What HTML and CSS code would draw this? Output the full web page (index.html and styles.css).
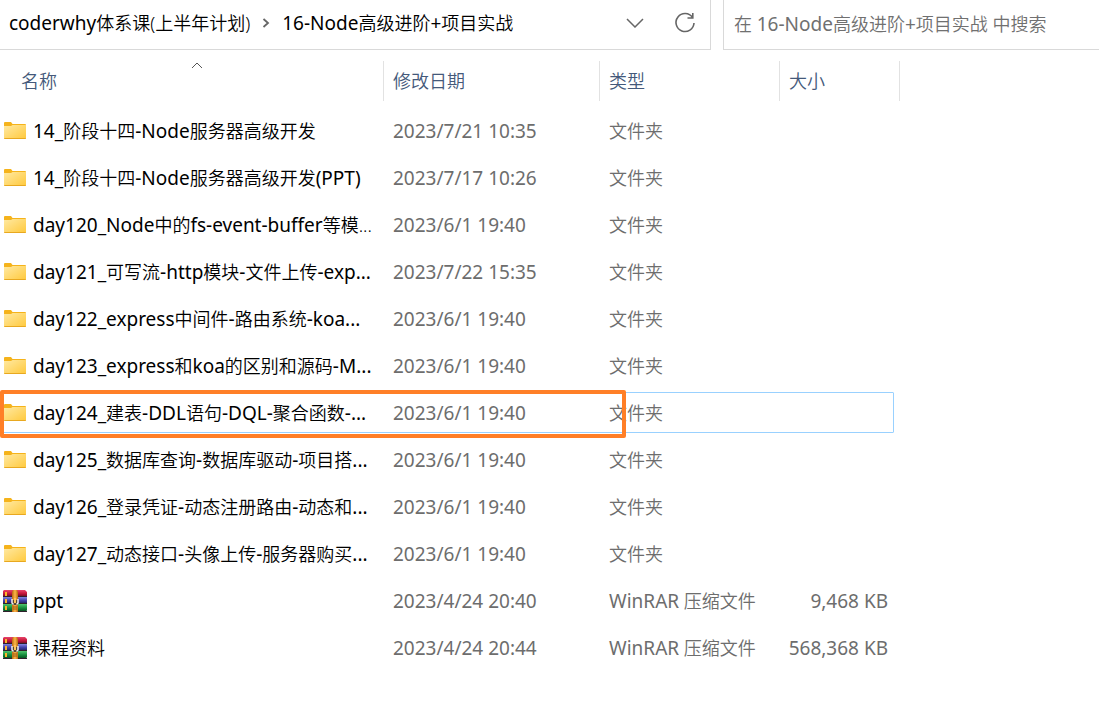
FILE: index.html
```html
<!DOCTYPE html>
<html lang="zh-CN">
<head>
<meta charset="utf-8">
<title>16-Node高级进阶+项目实战</title>
<link rel="stylesheet" href="styles.css">
</head>
<body>
<svg width="0" height="0" class="defs" aria-hidden="true">
  <defs>
    <linearGradient id="gf" x1="0" y1="0" x2="1" y2="1"><stop offset="0" stop-color="#ffe9a2"/><stop offset="1" stop-color="#ffc93c"/></linearGradient>
    <linearGradient id="gr" x1="0" y1="0" x2="0" y2="1"><stop offset="0" stop-color="#e8456a"/><stop offset=".5" stop-color="#c4173c"/><stop offset="1" stop-color="#5e0b20"/></linearGradient>
    <linearGradient id="gb" x1="0" y1="0" x2="0" y2="1"><stop offset="0" stop-color="#8585e0"/><stop offset=".5" stop-color="#4040a8"/><stop offset="1" stop-color="#1c1c55"/></linearGradient>
    <linearGradient id="gg" x1="0" y1="0" x2="0" y2="1"><stop offset="0" stop-color="#4fc56c"/><stop offset=".5" stop-color="#158a3c"/><stop offset="1" stop-color="#06401a"/></linearGradient>
    <linearGradient id="gs" x1="0" y1="0" x2="1" y2="0"><stop offset="0" stop-color="#b86a10"/><stop offset=".5" stop-color="#ffb84a"/><stop offset="1" stop-color="#b86a10"/></linearGradient>
    <symbol id="folder" viewBox="0 0 22 17">
      <path d="M0 1Q0 0 1 0H7L8.500 2H21Q22 2 22 3V8H0Z" fill="#f5b31b"/>
      <path d="M0 4H7L8.500 3H22V16Q22 17 21 17H1Q0 17 0 16Z" fill="url(#gf)"/>
      <path d="M0 16H22Q22 17 21 17H1Q0 17 0 16Z" fill="#e8a820"/>
    </symbol>
    <symbol id="rar" viewBox="0 0 24 22">
      <path d="M1 0H22L24 2V7H0V1Z" fill="url(#gr)"/>
      <path d="M0 7H24V14H0Z" fill="url(#gb)"/>
      <path d="M0 14H24V20L23 22H1L0 20Z" fill="url(#gg)"/>
      <path d="M0 6.500H24M0 13.500H24M0 21.500H24" stroke="#30202c"/>
      <path d="M2 2H4V6H2ZM2 9H4V13H2ZM2 16H4V20H2Z" fill="#ffb52a"/>
      <path d="M10 0H14L15 2V22H9V2Z" fill="url(#gs)"/>
      <path d="M9 10H15V15H9Z" fill="#59452e"/>
      <path d="M9 9V13L10.500 14.500M15 9V13L13.500 14.500" fill="none" stroke="#f0f0f0" stroke-width="1.500"/>
      <path d="M11 8H13V13H11Z" fill="#ffc45a"/>
      <path d="M10 17H14M10 19H14" stroke="#9a5a12"/>
    </symbol>
  </defs>
</svg>
<header class="topbar">
  <div class="address">
    <nav class="crumbs" aria-label="路径">
      <a href="#parent"><span class="en">coderwhy</span>体系课(上半年计划)</a>
      <svg class="sep" width="8" height="10" viewBox="0 0 8 10"><path d="M1.500 1L6 5L1.500 9" fill="none" stroke="#666" stroke-width="1.800"/></svg>
      <a href="#current"><span class="en">16-Node</span>高级进阶<span class="en">+</span>项目实战</a>
    </nav>
    <button class="tool" aria-label="以前的位置"><svg width="18" height="10" viewBox="0 0 18 10"><path d="M1 1L9 9L17 1" fill="none" stroke="#666" stroke-width="1.500"/></svg></button>
    <button class="tool" aria-label="刷新"><svg width="22" height="22" viewBox="0 0 22 22"><path d="M18.500 5.500A9 9 0 1 0 20 11M18.800 1V6H13.500" fill="none" stroke="#666" stroke-width="1.600"/></svg></button>
  </div>
  <div class="search">
    <input id="q" type="search" placeholder=" ">
    <label for="q">在 <span class="en">16-Node</span>高级进阶<span class="en">+</span>项目实战 中搜索</label>
  </div>
</header>
<main class="files">
  <table>
    <colgroup><col class="c-name"><col class="c-date"><col class="c-type"><col class="c-size"></colgroup>
    <thead>
      <tr>
        <th><span class="head first">名称<svg class="sort" width="12" height="7" viewBox="0 0 12 7"><path d="M1 6L6 1L11 6" fill="none" stroke="#555"/></svg></span></th>
        <th><span class="head">修改日期</span></th>
        <th><span class="head">类型</span></th>
        <th><span class="head">大小</span></th>
      </tr>
    </thead>
    <tbody>
      <tr><td class="name"><svg class="folder"><use href="#folder"/></svg><span class="en">14_</span>阶段十四<span class="en">-Node</span>服务器高级开发</td><td class="en">2023/7/21 10:35</td><td>文件夹</td><td></td></tr>
      <tr><td class="name"><svg class="folder"><use href="#folder"/></svg><span class="en">14_</span>阶段十四<span class="en">-Node</span>服务器高级开发<span class="en">(PPT)</span></td><td class="en">2023/7/17 10:26</td><td>文件夹</td><td></td></tr>
      <tr><td class="name"><svg class="folder"><use href="#folder"/></svg><span class="en">day120_Node</span>中的<span class="en">fs-event-buffer</span>等模...</td><td class="en">2023/6/1 19:40</td><td>文件夹</td><td></td></tr>
      <tr><td class="name"><svg class="folder"><use href="#folder"/></svg><span class="en">day121_</span>可写流<span class="en">-http</span>模块<span class="en">-</span>文件上传<span class="en">-exp...</span></td><td class="en">2023/7/22 15:35</td><td>文件夹</td><td></td></tr>
      <tr><td class="name"><svg class="folder"><use href="#folder"/></svg><span class="en">day122_express</span>中间件<span class="en">-</span>路由系统<span class="en">-koa...</span></td><td class="en">2023/6/1 19:40</td><td>文件夹</td><td></td></tr>
      <tr><td class="name"><svg class="folder"><use href="#folder"/></svg><span class="en">day123_express</span>和<span class="en">koa</span>的区别和源码<span class="en">-M...</span></td><td class="en">2023/6/1 19:40</td><td>文件夹</td><td></td></tr>
      <tr class="focused"><td class="name"><svg class="folder"><use href="#folder"/></svg><span class="en">day124_</span>建表<span class="en">-DDL</span>语句<span class="en">-DQL-</span>聚合函数<span class="en">-...</span></td><td class="en">2023/6/1 19:40</td><td>文件夹</td><td></td></tr>
      <tr><td class="name"><svg class="folder"><use href="#folder"/></svg><span class="en">day125_</span>数据库查询<span class="en">-</span>数据库驱动<span class="en">-</span>项目搭<span class="en">...</span></td><td class="en">2023/6/1 19:40</td><td>文件夹</td><td></td></tr>
      <tr><td class="name"><svg class="folder"><use href="#folder"/></svg><span class="en">day126_</span>登录凭证<span class="en">-</span>动态注册路由<span class="en">-</span>动态和<span class="en">...</span></td><td class="en">2023/6/1 19:40</td><td>文件夹</td><td></td></tr>
      <tr><td class="name"><svg class="folder"><use href="#folder"/></svg><span class="en">day127_</span>动态接口<span class="en">-</span>头像上传<span class="en">-</span>服务器购买<span class="en">...</span></td><td class="en">2023/6/1 19:40</td><td>文件夹</td><td></td></tr>
      <tr><td class="name"><svg class="rar"><use href="#rar"/></svg><span class="en">ppt</span></td><td class="en">2023/4/24 20:40</td><td><span class="en">WinRAR</span> 压缩文件</td><td class="en size">9,468 KB</td></tr>
      <tr><td class="name"><svg class="rar"><use href="#rar"/></svg>课程资料</td><td class="en">2023/4/24 20:44</td><td><span class="en">WinRAR</span> 压缩文件</td><td class="en size">568,368 KB</td></tr>
    </tbody>
  </table>
</main>
</body>
</html>
```
FILE: styles.css
```css
*, *::before, *::after { box-sizing: border-box; }
body {
  margin: 0;
  background: #fff;
  color: #000;
  font: 350 18px/24px "Noto Sans", "Noto Sans CJK SC", sans-serif;
}
.defs { position: absolute; }
.en { font-size: 19px; font-weight: 400; }
.topbar { display: flex; gap: 12px; height: 50px; }
.address {
  display: flex;
  align-items: center;
  flex: 0 0 711px;
  padding: 0 13px 4px 9px;
  border: solid #d9d9d9;
  border-width: 0 1px 1px 0;
}
.crumbs { display: flex; align-items: center; flex: 1; gap: 12px; white-space: nowrap; }
.crumbs a { color: #000; text-decoration: none; }
.tool {
  display: grid;
  place-items: center;
  width: 24px;
  height: 24px;
  margin-left: 26px;
  padding: 0;
  border: 0;
  background: none;
}
.search {
  position: relative;
  flex: 1;
  border: solid #d9d9d9;
  border-width: 0 0 1px 1px;
}
.search input {
  width: 100%;
  height: 100%;
  padding: 0 10px 4px;
  border: 0;
  outline: 0;
  background: none;
  font: inherit;
}
.search label {
  position: absolute;
  inset: 12px auto auto 10px;
  color: #707070;
  white-space: nowrap;
  pointer-events: none;
}
.search input:not(:placeholder-shown) + label { display: none; }
table { position: relative; width: 900px; border-collapse: collapse; table-layout: fixed; }
.c-name { width: 384px; }
.c-date { width: 216px; }
.c-type { width: 180px; }
.c-size { width: 120px; }
th { height: 58px; padding: 4px 0 0; font-weight: inherit; text-align: left; color: #44597a; }
.head {
  position: relative;
  display: block;
  height: 40px;
  padding-left: 9px;
  border-right: 1px solid #e2e2e2;
  line-height: 40px;
}
.first { padding-left: 21px; }
.sort { position: absolute; top: 1px; left: 191px; }
td { height: 47px; padding: 0 0 2px 9px; color: #6d6d6d; white-space: nowrap; }
.name { position: relative; padding-left: 3px; color: #000; }
.name svg { display: inline-block; vertical-align: -1px; }
.folder { width: 22px; height: 17px; margin: 0 7px 0 1px; }
.rar { width: 24px; height: 22px; margin-right: 6px; }
.name .rar { vertical-align: -4px; }
.size { padding: 0 12px 2px 0; text-align: right; }
.focused .name::before,
.focused .name::after {
  content: "";
  position: absolute;
  left: 0;
  pointer-events: none;
}
.focused .name::before {
  top: 2px;
  width: 894px;
  height: 41px;
  border: 1px solid #99d1ff;
  border-radius: 1px;
}
.focused .name::after {
  top: 0;
  width: 626px;
  height: 48px;
  border: 4px solid #ff7f27;
  border-radius: 2px;
}
```
